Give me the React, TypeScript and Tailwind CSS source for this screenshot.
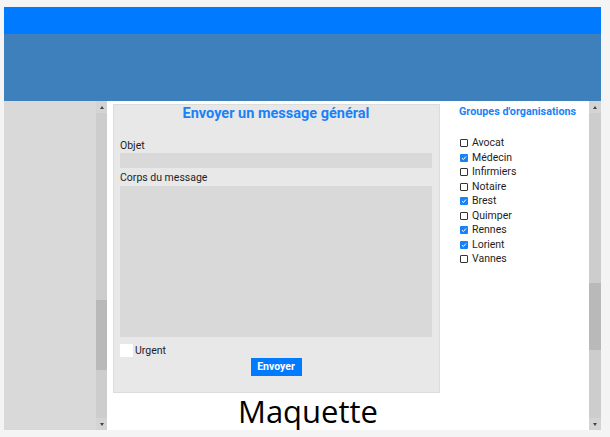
import React from 'react';

const groupes = [
    { name: 'Avocat', checked: false },
    { name: 'Médecin', checked: true },
    { name: 'Infirmiers', checked: false },
    { name: 'Notaire', checked: false },
    { name: 'Brest', checked: true },
    { name: 'Quimper', checked: false },
    { name: 'Rennes', checked: true },
    { name: 'Lorient', checked: true },
    { name: 'Vannes', checked: false },
];

// Fake scrollbar, like the one drawn in the mockup
const Scrollbar: React.FC<{ thumbTop: number; thumbHeight: number; className?: string }> = ({ thumbTop, thumbHeight, className = '' }) => (
    <div className={`flex flex-col shrink-0 bg-[#cdcdcd] ${className}`}>
        <div className="h-[12px] flex items-center justify-center bg-[#d4d4d4]">
            <div className="w-0 h-0 border-l-[2.5px] border-r-[2.5px] border-b-[3px] border-l-transparent border-r-transparent border-b-[#444]" />
        </div>
        <div className="flex-1 flex flex-col">
            <div style={{ height: thumbTop }} />
            <div className="bg-[#b9b9b9]" style={{ height: thumbHeight }} />
        </div>
        <div className="h-[12px] flex items-center justify-center bg-[#d4d4d4]">
            <div className="w-0 h-0 border-l-[2.5px] border-r-[2.5px] border-t-[3px] border-l-transparent border-r-transparent border-t-[#444]" />
        </div>
    </div>
);

const CheckBox: React.FC<{ checked: boolean }> = ({ checked }) =>
    checked ? (
        <span className="w-[8px] h-[8px] shrink-0 rounded-[1px] bg-[#1a82f7] flex items-center justify-center">
            <svg width="6" height="6" viewBox="0 0 6 6">
                <path d="M1 3.2 L2.4 4.5 L5 1.5" fill="none" stroke="white" strokeWidth="1" />
            </svg>
        </span>
    ) : (
        <span className="block w-[8px] h-[8px] shrink-0 rounded-[1px] border border-[#333] bg-white" />
    );

export default function App() {
    return (
        <div className="w-[610px] h-[437px] bg-[#f4f4f4] pt-[7px] pl-[4px] overflow-hidden" style={{ fontFamily: 'Roboto, "Noto Sans", sans-serif' }}>
            <div className="w-[597px] flex flex-col">
                <div className="h-[27px] bg-[#007bff]" />
                <div className="h-[67px] bg-[#3d80bb]" />
                <div className="h-[329px] flex">
                    <div className="w-[92px] shrink-0 bg-[#d9d9d9]" />
                    <Scrollbar className="w-[11px]" thumbTop={187} thumbHeight={70} />
                    <div className="w-[482px] shrink-0 bg-white flex flex-col">
                        <div className="flex">
                            <div className="ml-[6px] mt-[3px] w-[327px] h-[289px] shrink-0 bg-[#e8e8e8] border border-[#dcdcdc] flex flex-col pl-[6px] pr-[7px] text-[#1e1e1e]">
                                <div className="h-[17px] text-center text-[14.5px] leading-[17px] font-bold text-[#1a82f7]">
                                    Envoyer un message général
                                </div>
                                <div className="mt-[17px] h-[14px] text-[10.5px] leading-[14px]">Objet</div>
                                <div className="mt-0 h-[15px] bg-[#d9d9d9]" />
                                <div className="mt-[3px] h-[14px] text-[10.5px] leading-[14px]">Corps du message</div>
                                <div className="mt-[1px] h-[151px] bg-[#d9d9d9]" />
                                <div className="mt-[7px] flex items-center h-[13px]">
                                    <span className="w-[13px] h-[13px] bg-white" />
                                    <span className="ml-[2px] text-[10.5px] leading-[13px]">Urgent</span>
                                </div>
                                <div className="mt-[1px] flex justify-center">
                                    <button className="h-[18px] w-[51px] bg-[#007bff] text-white text-[10.5px] font-bold leading-[18px]">
                                        Envoyer
                                    </button>
                                </div>
                            </div>
                            <div className="ml-[19px] flex flex-col text-[#1e1e1e] whitespace-nowrap">
                                <div className="mt-[3px] h-[15px] text-[10.8px] leading-[15px] font-bold text-[#1a82f7]">
                                    Groupes d'organisations
                                </div>
                                <div className="mt-[17px] flex flex-col">
                                    {groupes.map(g => (
                                        <div key={g.name} className="h-[14.5px] flex items-center">
                                            <span className="ml-[1px]"><CheckBox checked={g.checked} /></span>
                                            <span className="ml-[4px] text-[10.5px] leading-[14px]">{g.name}</span>
                                        </div>
                                    ))}
                                </div>
                            </div>
                        </div>
                        <div className="pl-[131px] mt-[0px] text-[31px] leading-[36px] text-black" style={{ fontFamily: '"Open Sans", sans-serif' }}>
                            Maquette
                        </div>
                    </div>
                    <Scrollbar className="w-[12px]" thumbTop={170} thumbHeight={67} />
                </div>
            </div>
        </div>
    );
}
